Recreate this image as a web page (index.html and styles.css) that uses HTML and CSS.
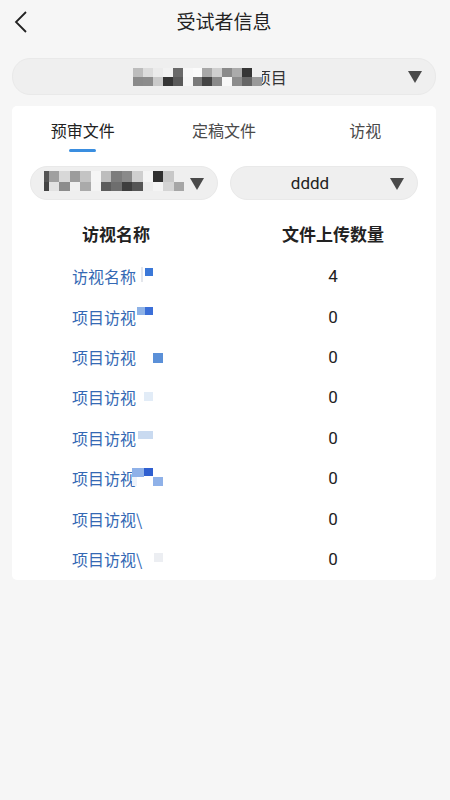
FILE: index.html
```html
<!DOCTYPE html>
<html lang="zh">
<head>
<meta charset="utf-8">
<link rel="stylesheet" href="styles.css">
</head>
<body>
<div class="page">
  <header class="topbar">
    <svg class="back" width="14" height="22" viewBox="0 0 14 22"><path d="M12 1 L2 11 L12 21" fill="none" stroke="#222" stroke-width="1.8"/></svg>
    <div class="title">受试者信息</div>
  </header>

  <div class="select main-select">
    <div class="select-text">
      <span class="mosaic mosaic-main">
        <i style="background:#bdbdbd"></i><i style="background:#dcdcdc"></i><i style="background:#ebebeb"></i><i style="background:#f2f2f2"></i><i style="background:#6a6a6a"></i><i style="background:#f8f8f8"></i><i style="background:#fbfbfb"></i><i style="background:#a8a8a8"></i><i style="background:#cfcfcf"></i><i style="background:#8a8a8a"></i><i style="background:#ababab"></i><i style="background:#353535"></i><i style="background:#efefef"></i>
        <i style="background:#8a8a8a"></i><i style="background:#8c8c8c"></i><i style="background:#cacaca"></i><i style="background:#353535"></i><i style="background:#5a5a5a"></i><i style="background:#f6f6f6"></i><i style="background:#7a7a7a"></i><i style="background:#444"></i><i style="background:#8a8a8a"></i><i style="background:#f8f8f8"></i><i style="background:#8c8c8c"></i><i style="background:#666"></i><i style="background:#9a9a9a"></i>
      </span><span class="sel-label">项目</span>
    </div>
    <span class="tri"></span>
  </div>

  <section class="card">
    <nav class="tabs">
      <div class="tab active"><span>预审文件</span><b class="bar"></b></div>
      <div class="tab"><span>定稿文件</span></div>
      <div class="tab"><span>访视</span></div>
    </nav>

    <div class="filters">
      <div class="select small left">
        <span class="mosaic mosaic-sub">
          <i style="background:#555"></i><i style="background:#a0a0a0"></i><i style="background:#d8d8d8"></i><i style="background:#9c9c9c"></i><i style="background:#c4c4c4"></i><i style="background:#f5f5f5"></i><i style="background:#bdbdbd"></i><i style="background:#7c7c7c"></i><i style="background:#8a8a8a"></i><i style="background:#cfcfcf"></i><i style="background:#f5f5f5"></i><i style="background:#303030"></i><i style="background:#c8c8c8"></i><i style="background:#efefef"></i>
          <i style="background:#444"></i><i style="background:#e2e2e2"></i><i style="background:#8c8c8c"></i><i style="background:#f0f0f0"></i><i style="background:#aaa"></i><i style="background:#f4f4f4"></i><i style="background:#5c5c5c"></i><i style="background:#6e6e6e"></i><i style="background:#3e3e3e"></i><i style="background:#555"></i><i style="background:#ececec"></i><i style="background:#f4f4f4"></i><i style="background:#d4d4d4"></i><i style="background:#a6a6a6"></i>
        </span>
        <span class="tri"></span>
      </div>
      <div class="select small">
        <span class="sel-value">dddd</span>
        <span class="tri"></span>
      </div>
    </div>

    <div class="table">
      <div class="th">访视名称</div>
      <div class="th">文件上传数量</div>

      <div class="td name"><span class="nm">访视名称<em class="px" style="left:69px;top:1px;width:2px;height:15px;background:#e3e6ec"></em><em class="px" style="left:73px;top:2px;width:8px;height:8px;background:#3b78d8"></em></span></div>
      <div class="td num">4</div>

      <div class="td name"><span class="nm">项目访视<em class="px" style="left:65px;top:0;width:8px;height:8px;background:#8eb2e6"></em><em class="px" style="left:73px;top:0;width:8px;height:8px;background:#3b6fd8"></em></span></div>
      <div class="td num">0</div>

      <div class="td name"><span class="nm">项目访视<em class="px" style="left:81px;top:6px;width:10px;height:10px;background:#5b90d8"></em></span></div>
      <div class="td num">0</div>

      <div class="td name"><span class="nm">项目访视<em class="px" style="left:72px;top:5px;width:9px;height:9px;background:#e2ecf7"></em></span></div>
      <div class="td num">0</div>

      <div class="td name"><span class="nm">项目访视<em class="px" style="left:66px;top:3px;width:15px;height:8px;background:#c9daf0"></em></span></div>
      <div class="td num">0</div>

      <div class="td name"><span class="nm">项目访视<em class="px" style="left:60px;top:0;width:12px;height:9px;background:#8fb1e8"></em><em class="px" style="left:60px;top:9px;width:5px;height:9px;background:#eef3fb"></em><em class="px" style="left:72px;top:0;width:9px;height:8px;background:#2f5fd0"></em><em class="px" style="left:81px;top:9px;width:10px;height:9px;background:#8fb1e8"></em></span></div>
      <div class="td num">0</div>

      <div class="td name"><span class="nm">项目访视\</span></div>
      <div class="td num">0</div>

      <div class="td name"><span class="nm">项目访视\<em class="px" style="left:82px;top:4px;width:9px;height:9px;background:#eceef2"></em></span></div>
      <div class="td num">0</div>
    </div>
  </section>
</div>
</body>
</html>
```

FILE: styles.css
```css
* { box-sizing: border-box; }
html, body { margin: 0; padding: 0; }
body {
  background: #f6f6f6;
  font-family: "Noto Sans CJK SC", "Noto Sans", sans-serif;
  color: #222;
  width: 450px;
  min-height: 800px;
}
.page { padding: 0 14px 0 12px; }

.topbar {
  position: relative;
  height: 42px;
  display: flex;
  align-items: center;
  justify-content: center;
}
.back { position: absolute; left: 2px; top: 11px; }
.title { font-size: 19px; color: #222; line-height: 24px; }

.select {
  background: #efefef;
  border: 1px solid #e9e9e9;
  border-radius: 18px;
  display: flex;
  align-items: center;
  position: relative;
}
.main-select {
  margin-top: 16px;
  height: 37px;
  justify-content: center;
}
.select-text { display: flex; align-items: center; margin-right: 28px; }
.sel-label { font-size: 16px; color: #333; margin-left: -7px; line-height: 20px; }
.tri {
  position: absolute;
  right: 13px;
  top: 50%;
  margin-top: -6px;
  width: 0; height: 0;
  border-left: 7.5px solid transparent;
  border-right: 7.5px solid transparent;
  border-top: 12px solid #4a4a4a;
}

.mosaic { display: grid; position: relative; z-index: 1; }
.mosaic i { display: block; }
.mosaic-main {
  grid-template-columns: repeat(13, 9.9px);
  grid-template-rows: 9px 9px;
}
.mosaic-sub {
  grid-template-columns: 5px repeat(13, 10.4px);
  grid-template-rows: 11px 9px;
  margin-left: 13px;
  margin-top: -4px;
}

.card {
  margin-top: 11px;
  background: #fff;
  border-radius: 5px;
  padding-bottom: 1px;
}
.tabs { display: grid; grid-template-columns: repeat(3, 1fr); height: 47px; }
.tab {
  display: flex;
  flex-direction: column;
  align-items: center;
  padding-top: 12px;
  font-size: 16px;
  color: #4a4a4a;
}
.tab span { line-height: 24px; }
.tab.active span { color: #222; }
.bar {
  display: block;
  width: 27px;
  height: 3px;
  border-radius: 2px;
  background: #3a8ee0;
  margin-top: 7px;
}

.filters {
  display: grid;
  grid-template-columns: 1fr 1fr;
  column-gap: 12px;
  padding: 0 18px;
  margin-top: 13px;
}
.select.small {
  height: 34px;
  border-radius: 17px;
  justify-content: center;
}
.select.small.left { justify-content: flex-start; }
.select.small .tri { right: 13px; margin-top: -5px; }
.sel-value {
  font-family: Roboto, "Noto Sans", sans-serif;
  font-size: 17px;
  color: #222;
  margin-right: 28px;
}

.table {
  display: grid;
  grid-template-columns: 208px 206px;
  column-gap: 10px;
  grid-template-rows: 44px;
  grid-auto-rows: 40.4px;
  margin-top: 12px;
}
.th {
  font-size: 17px;
  font-weight: 700;
  color: #222;
  display: flex;
  align-items: center;
  justify-content: center;
  height: 42px;
  align-self: start;
}
.td { display: flex; align-items: center; }
.td.name { padding-left: 60px; }
.nm {
  position: relative;
  font-size: 16px;
  color: #3569b4;
  line-height: 20px;
}
.px { position: absolute; display: block; }
.td.num {
  justify-content: center;
  font-family: Roboto, "Noto Sans", sans-serif;
  font-size: 17px;
  color: #222;
}
```
